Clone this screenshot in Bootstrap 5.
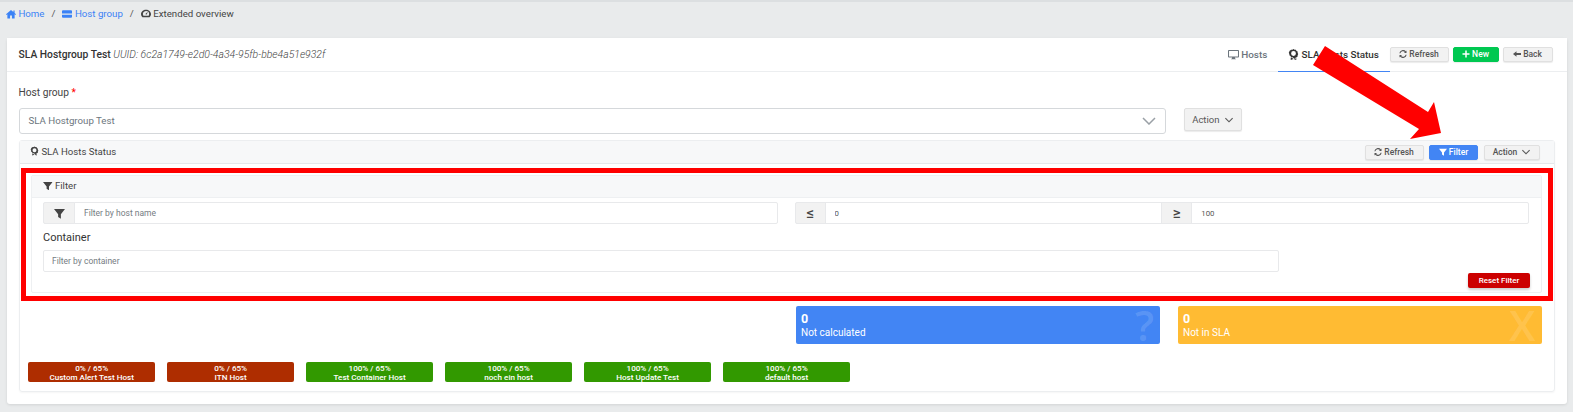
<!DOCTYPE html>
<html lang="en">
<head>
    <meta charset="UTF-8">
    <title>SLA Hostgroup Test</title>
    <link href="https://cdn.jsdelivr.net/npm/bootstrap@5.3.3/dist/css/bootstrap.min.css" rel="stylesheet">
    <style>
        body { background: #e9ebec; font-family: Roboto, "Liberation Sans", sans-serif; font-size: 11px; color: #373a3c; height: 412px; overflow: hidden; border-top: 2px solid #dcdfe1; }
        svg.ico { width: 1em; height: 1em; fill: currentColor; vertical-align: -0.12em; }
        .crumbs { margin: 0; padding: 5px 6px 0; height: 36px; font-size: 9.7px; --bs-breadcrumb-divider-color: #555; --bs-breadcrumb-item-active-color: #444; --bs-breadcrumb-item-padding-x: 7px; }
        .crumbs a { color: #3b82f6; text-decoration: none; }
        .crumbs .breadcrumb-item { line-height: 13px; }
        .crumbs svg.ico { width: 10px; height: 10px; vertical-align: -1.5px; }
        .sheet { margin: 0 6.5px; height: 366px; border: 0; border-radius: 3px; box-shadow: 0 1px 3px rgba(0,0,0,.1); }
        .sheet-head { height: 34px; padding: 0 14px 0 12px; background: #fff; border-bottom: 1px solid #eceef0; }
        .sheet-title { font-size: 10.3px; color: #333; }
        .sheet-title i { color: #444; font-weight: 300; font-size: 10.45px; }
        .tab-link { height: 34px; line-height: 33px; font-size: 9.9px; font-weight: 500; color: #6c757d; padding: 0; text-align: center; }
        .tab-link svg.ico { width: 11px; height: 11px; vertical-align: -2px; }
        .tab-hosts { width: 52px; }
        .tab-sla { width: 112px; color: #333; border-bottom: 1px solid #4285f4; }
        .xbtn { font-family: Roboto, sans-serif; font-size: 8.5px; font-weight: 500; height: 15px; line-height: 13px; padding: 0; border-radius: 2px; background: #f2f2f2; border: 1px solid #e0e0e0; color: #555; box-shadow: 0 1px 1px rgba(0,0,0,.08); }
        .xbtn svg.ico { width: 8px; height: 8px; vertical-align: -1px; }
        .w-refresh { width: 59px; }
        .w-new { width: 46px; background: #00c851; border-color: #00c851; color: #fff; }
        .w-back { width: 50px; }
        .w-filter { width: 49px; background: #4285f4; border-color: #4285f4; color: #fff; }
        .w-action { width: 56px; }
        .w-action svg.ico, .action-big svg.ico { margin-left: 3px; }
        .panel-btns { gap: 5.5px; }
        .sheet-body { padding: 14px 12px 12px 12px; }
        .field-label { height: 14px; line-height: 14px; font-size: 10.2px; margin: 0 0 8px; color: #444; }
        .field-label b { color: #f00; font-weight: 400; }
        .host-select { width: 1147px; height: 26px; padding: 0 9px; border: 1px solid #d5d8db; border-radius: 3px; color: #6c757d; font-size: 9.7px; }
        .action-big { width: 58px; height: 23px; margin-left: 18px; font-size: 9.5px; font-weight: 400; }
        .panel { margin-top: 6px; height: 252px; border: 1px solid #eceef0; border-radius: 3px; box-shadow: 0 1px 2px rgba(0,0,0,.04); position: relative; }
        .panel-head { height: 23px; padding: 0 14px 0 10.5px; background: #f7f8f9; border-bottom: 1px solid #e5e7ea; font-size: 9.6px; color: #444; }
        .panel-head svg.ico { width: 9px; height: 10px; vertical-align: -1.5px; }
        .panel-head .xbtn svg.ico { width: 8px; height: 8px; vertical-align: -1px; }
        .panel-inner { margin: 11px 11.5px 0 11.5px; height: 118px; border: 1px solid #eef0f2; border-radius: 2px; }
        .inner-head { height: 22px; line-height: 20px; padding-left: 11px; background: #f7f8f9; border-bottom: 1px solid #eef0f2; font-size: 9.6px; color: #444; }
        .filter-row { margin: 0; padding-top: 4px; }
        .filter-row > div { padding: 0 9px 0 11px; }
        .filter-row > div + div { padding: 0 12px 0 8px; }
        .filter-row > .col-10 { padding-right: 11px; }
        .group-sm { height: 22px; flex-wrap: nowrap; }
        .group-sm .input-group-text { height: 22px; padding: 0; justify-content: center; background: #f2f2f2; border: 1px solid #e8e9eb; font-size: 15px; color: #444; border-radius: 2px 0 0 2px; font-weight: 500; }
        .group-sm .input-group-text svg.ico { width: 11px; height: 11px; }
        .group-sm .form-control, .plain-input { height: 22px; min-height: 0; padding: 0 9px; border: 1px solid #e8e9eb; font-size: 8.5px; color: #555; border-radius: 0 2px 2px 0; }
        .group-sm .form-control { padding-left: 9px; }
        .group-sm .form-control::placeholder, .plain-input::placeholder { color: #757c83; }
        .group-sm .num-input { font-size: 7.8px; }
        .plain-input { border-radius: 2px; padding-left: 8px; }
        .addon-w { width: 32px; }
        .addon-op { width: 31px; }
        .box-label { height: 15px; line-height: 15px; margin: 6px 0 5px; font-size: 11px; color: #333; }
        .reset-row { padding: 1px 11px 0 0; }
        .reset-btn { width: 62px; height: 15px; padding: 0; line-height: 15px; border: 0; border-radius: 2px; background: #cc0000; color: #fff; font-size: 8px; font-weight: 500; box-shadow: 0 2px 3px rgba(0,0,0,.2); }
        .stat-row { margin: 13px 0 0; }
        .stat-col { padding: 0 10px 0 9.5px; }
        .stat-col-last { padding: 0 12px 0 8px; }
        .stat-box { height: 38px; padding: 5px 5px; border-radius: 2px; color: #fff; font-size: 10px; line-height: 13px; position: relative; }
        .stat-box b { display: block; font-size: 12.5px; line-height: 15px; font-weight: 700; }
        .stat-blue { background: #4285f4; }
        .stat-yellow { background: #ffbb33; }
        .stat-mark { position: absolute; right: 6px; top: 0; font-size: 42px; line-height: 38px; font-weight: 600; color: rgba(255,255,255,.14); font-family: "Open Sans", sans-serif; }
        .tag-row { margin: 18px 0 0 8.5px; gap: 11.7px; }
        .host-tag { width: 127.3px; height: 20px; border-radius: 2px; color: #fff; font-size: 8.1px; font-weight: 500; line-height: 9px; text-align: center; padding-top: 2px; }
        .tag-bad { background: #ae2d00; }
        .tag-ok { background: #329900; }
        .mark-box { position: absolute; left: 21px; top: 168px; width: 1532px; height: 133px; border: 5px solid #f00; pointer-events: none; }
        .mark-arrow { position: absolute; left: 1300px; top: 40px; pointer-events: none; }
    </style>
</head>
<body>

<svg width="0" height="0" class="position-absolute">
    <symbol id="i-home" viewBox="0 0 16 16"><path d="M8 1.5 0 8.3l1 1.1 1.2-1V15h4.3v-4.5h3V15h4.3V8.4l1.2 1 1-1.1-2.2-1.9V2.5h-2v2.2z"/></symbol>
    <symbol id="i-server" viewBox="0 0 16 16"><path d="M1.5 2h13A1.5 1.5 0 0 1 16 3.5V7H0V3.5A1.5 1.5 0 0 1 1.5 2zM0 9h16v3.5a1.5 1.5 0 0 1-1.5 1.5h-13A1.5 1.5 0 0 1 0 12.5z"/></symbol>
    <symbol id="i-gauge" viewBox="0 0 16 16"><path fill-rule="evenodd" d="M8 1C3.600 1 0 4.300 0 8c0 2 .9 3.800 2.300 5h11.400C15.100 11.800 16 10 16 8c0-3.700-3.600-7-8-7zM8 3a5 5 0 0 1 5 5c0 1-.3 1.900-.8 2.700H3.800A5 5 0 0 1 8 3zM7 8l3-3 .8.7L8.500 9z"/></symbol>
    <symbol id="i-monitor" viewBox="0 0 16 16"><path fill-rule="evenodd" d="M1.200 1.500h13.600c.7 0 1.200.5 1.200 1.200v8.600c0 .7-.5 1.200-1.200 1.200H10l.4 1.500h1.100v1h-7v-1h1.100l.4-1.500H1.200C.5 12.500 0 12 0 11.300V2.700c0-.7.5-1.200 1.200-1.200zm.3 1.500v8h13V3z"/></symbol>
    <symbol id="i-award" viewBox="0 0 16 16"><path fill-rule="evenodd" d="M8 0l1.600 1 1.900.1.900 1.700 1.600 1v1.900l.9 1.700-.9 1.700v1.900l-1.600 1-.9 1.700-1.900.1L8 13l-1.600-1-1.900-.1-.9-1.700-1.600-1V7.300L1.100 5.600 2 3.900V2.800l1.600-1 .9-.7 1.900-.1zM8 3a3.500 3.500 0 1 0 0 7 3.500 3.500 0 0 0 0-7zM4 12.500l2 .7L8 14.500l2-1.300 2-.7V16l-4-1.500L4 16z"/></symbol>
    <symbol id="i-sync" viewBox="0 0 16 16"><path d="M13.600 2.400 15 1v5h-5l1.900-1.900A5.500 5.500 0 0 0 2.700 6.500H.7a7.500 7.500 0 0 1 12.900-4.100zM2.400 13.600 1 15v-5h5l-1.900 1.900a5.500 5.500 0 0 0 9.200-2.400h2a7.500 7.500 0 0 1-12.900 4.100z"/></symbol>
    <symbol id="i-filter" viewBox="0 0 16 16"><path d="M0 1.500h16L10 9v6.500L6 13V9z"/></symbol>
    <symbol id="i-plus" viewBox="0 0 16 16"><path d="M6.500 1h3v5.500H15v3H9.500V15h-3V9.500H1v-3h5.500z"/></symbol>
    <symbol id="i-back" viewBox="0 0 16 16"><path d="M7 2.500v3.500h9v4H7v3.500L0 8z"/></symbol>
    <symbol id="i-chev" viewBox="0 0 16 16"><path d="M1.500 3.500 8 10l6.500-6.500L16 5l-8 8-8-8z"/></symbol>
</svg>

<ol class="breadcrumb crumbs">
    <li class="breadcrumb-item"><a href="#"><svg class="ico"><use href="#i-home"/></svg> Home</a></li>
    <li class="breadcrumb-item"><a href="#"><svg class="ico"><use href="#i-server"/></svg> Host group</a></li>
    <li class="breadcrumb-item active"><svg class="ico"><use href="#i-gauge"/></svg> Extended overview</li>
</ol>

<div class="card sheet">
    <div class="sheet-head d-flex align-items-center">
        <div class="sheet-title"><span class="fw-medium">SLA Hostgroup Test</span> <i>UUID: 6c2a1749-e2d0-4a34-95fb-bbe4a51e932f</i></div>
        <div class="ms-auto d-flex align-items-center">
            <div class="tab-link tab-hosts"><svg class="ico"><use href="#i-monitor"/></svg> Hosts</div>
            <div class="tab-link tab-sla ms-1"><svg class="ico"><use href="#i-award"/></svg> SLA Hosts Status</div>
            <div class="d-flex gap-1 ms-0">
                <button class="btn xbtn w-refresh"><svg class="ico"><use href="#i-sync"/></svg> Refresh</button>
                <button class="btn xbtn w-new"><svg class="ico"><use href="#i-plus"/></svg> New</button>
                <button class="btn xbtn w-back"><svg class="ico"><use href="#i-back"/></svg> Back</button>
            </div>
        </div>
    </div>
    <div class="sheet-body">
        <div class="field-label">Host group <b>*</b></div>
        <div class="d-flex align-items-start">
            <div class="host-select d-flex align-items-center justify-content-between">
                <span>SLA Hostgroup Test</span>
                <svg width="14" height="8" viewBox="0 0 14 8" fill="none" stroke="#9aa0a6" stroke-width="1.500"><path d="M1 1l6 6 6-6"/></svg>
            </div>
            <button class="btn xbtn action-big">Action <svg class="ico"><use href="#i-chev"/></svg></button>
        </div>
        <div class="panel">
            <div class="panel-head d-flex align-items-center">
                <div><svg class="ico"><use href="#i-award"/></svg> SLA Hosts Status</div>
                <div class="ms-auto d-flex panel-btns">
                    <button class="btn xbtn w-refresh"><svg class="ico"><use href="#i-sync"/></svg> Refresh</button>
                    <button class="btn xbtn w-filter"><svg class="ico"><use href="#i-filter"/></svg> Filter</button>
                    <button class="btn xbtn w-action">Action <svg class="ico"><use href="#i-chev"/></svg></button>
                </div>
            </div>
            <div class="panel-inner">
                <div class="inner-head"><svg class="ico"><use href="#i-filter"/></svg> Filter</div>
                <div class="row filter-row">
                    <div class="col-6">
                        <div class="input-group group-sm">
                            <span class="input-group-text addon-w"><svg class="ico"><use href="#i-filter"/></svg></span>
                            <input type="text" class="form-control" placeholder="Filter by host name">
                        </div>
                    </div>
                    <div class="col-6">
                        <div class="input-group group-sm">
                            <span class="input-group-text addon-op">≤</span>
                            <input type="text" class="form-control num-input" value="0">
                            <span class="input-group-text addon-op">≥</span>
                            <input type="text" class="form-control num-input" value="100">
                        </div>
                    </div>
                </div>
                <div class="row filter-row pt-0">
                    <div class="col-10">
                        <div class="box-label">Container</div>
                        <input type="text" class="form-control plain-input" placeholder="Filter by container">
                    </div>
                </div>
                <div class="d-flex justify-content-end reset-row">
                    <button class="btn reset-btn">Reset Filter</button>
                </div>
            </div>
            <div class="row stat-row">
                <div class="col-3 offset-6 stat-col">
                    <div class="stat-box stat-blue"><b>0</b>Not calculated<span class="stat-mark">?</span></div>
                </div>
                <div class="col-3 stat-col-last">
                    <div class="stat-box stat-yellow"><b>0</b>Not in SLA<span class="stat-mark">X</span></div>
                </div>
            </div>
            <div class="d-flex tag-row">
                <div class="host-tag tag-bad">0% / 65%<br>Custom Alert Test Host</div>
                <div class="host-tag tag-bad">0% / 65%<br>ITN Host</div>
                <div class="host-tag tag-ok">100% / 65%<br>Test Container Host</div>
                <div class="host-tag tag-ok">100% / 65%<br>noch ein host</div>
                <div class="host-tag tag-ok">100% / 65%<br>Host Update Test</div>
                <div class="host-tag tag-ok">100% / 65%<br>default host</div>
            </div>
        </div>
    </div>
</div>

<div class="mark-box"></div>
<svg class="mark-arrow" width="150" height="105" viewBox="1300 40 150 105">
    <polygon fill="#f00" points="1325,46 1313,65 1419,129 1410,139 1441,133 1434,102 1428,112"/>
</svg>

<script src="https://cdn.jsdelivr.net/npm/bootstrap@5.3.3/dist/js/bootstrap.bundle.min.js"></script>
</body>
</html>
